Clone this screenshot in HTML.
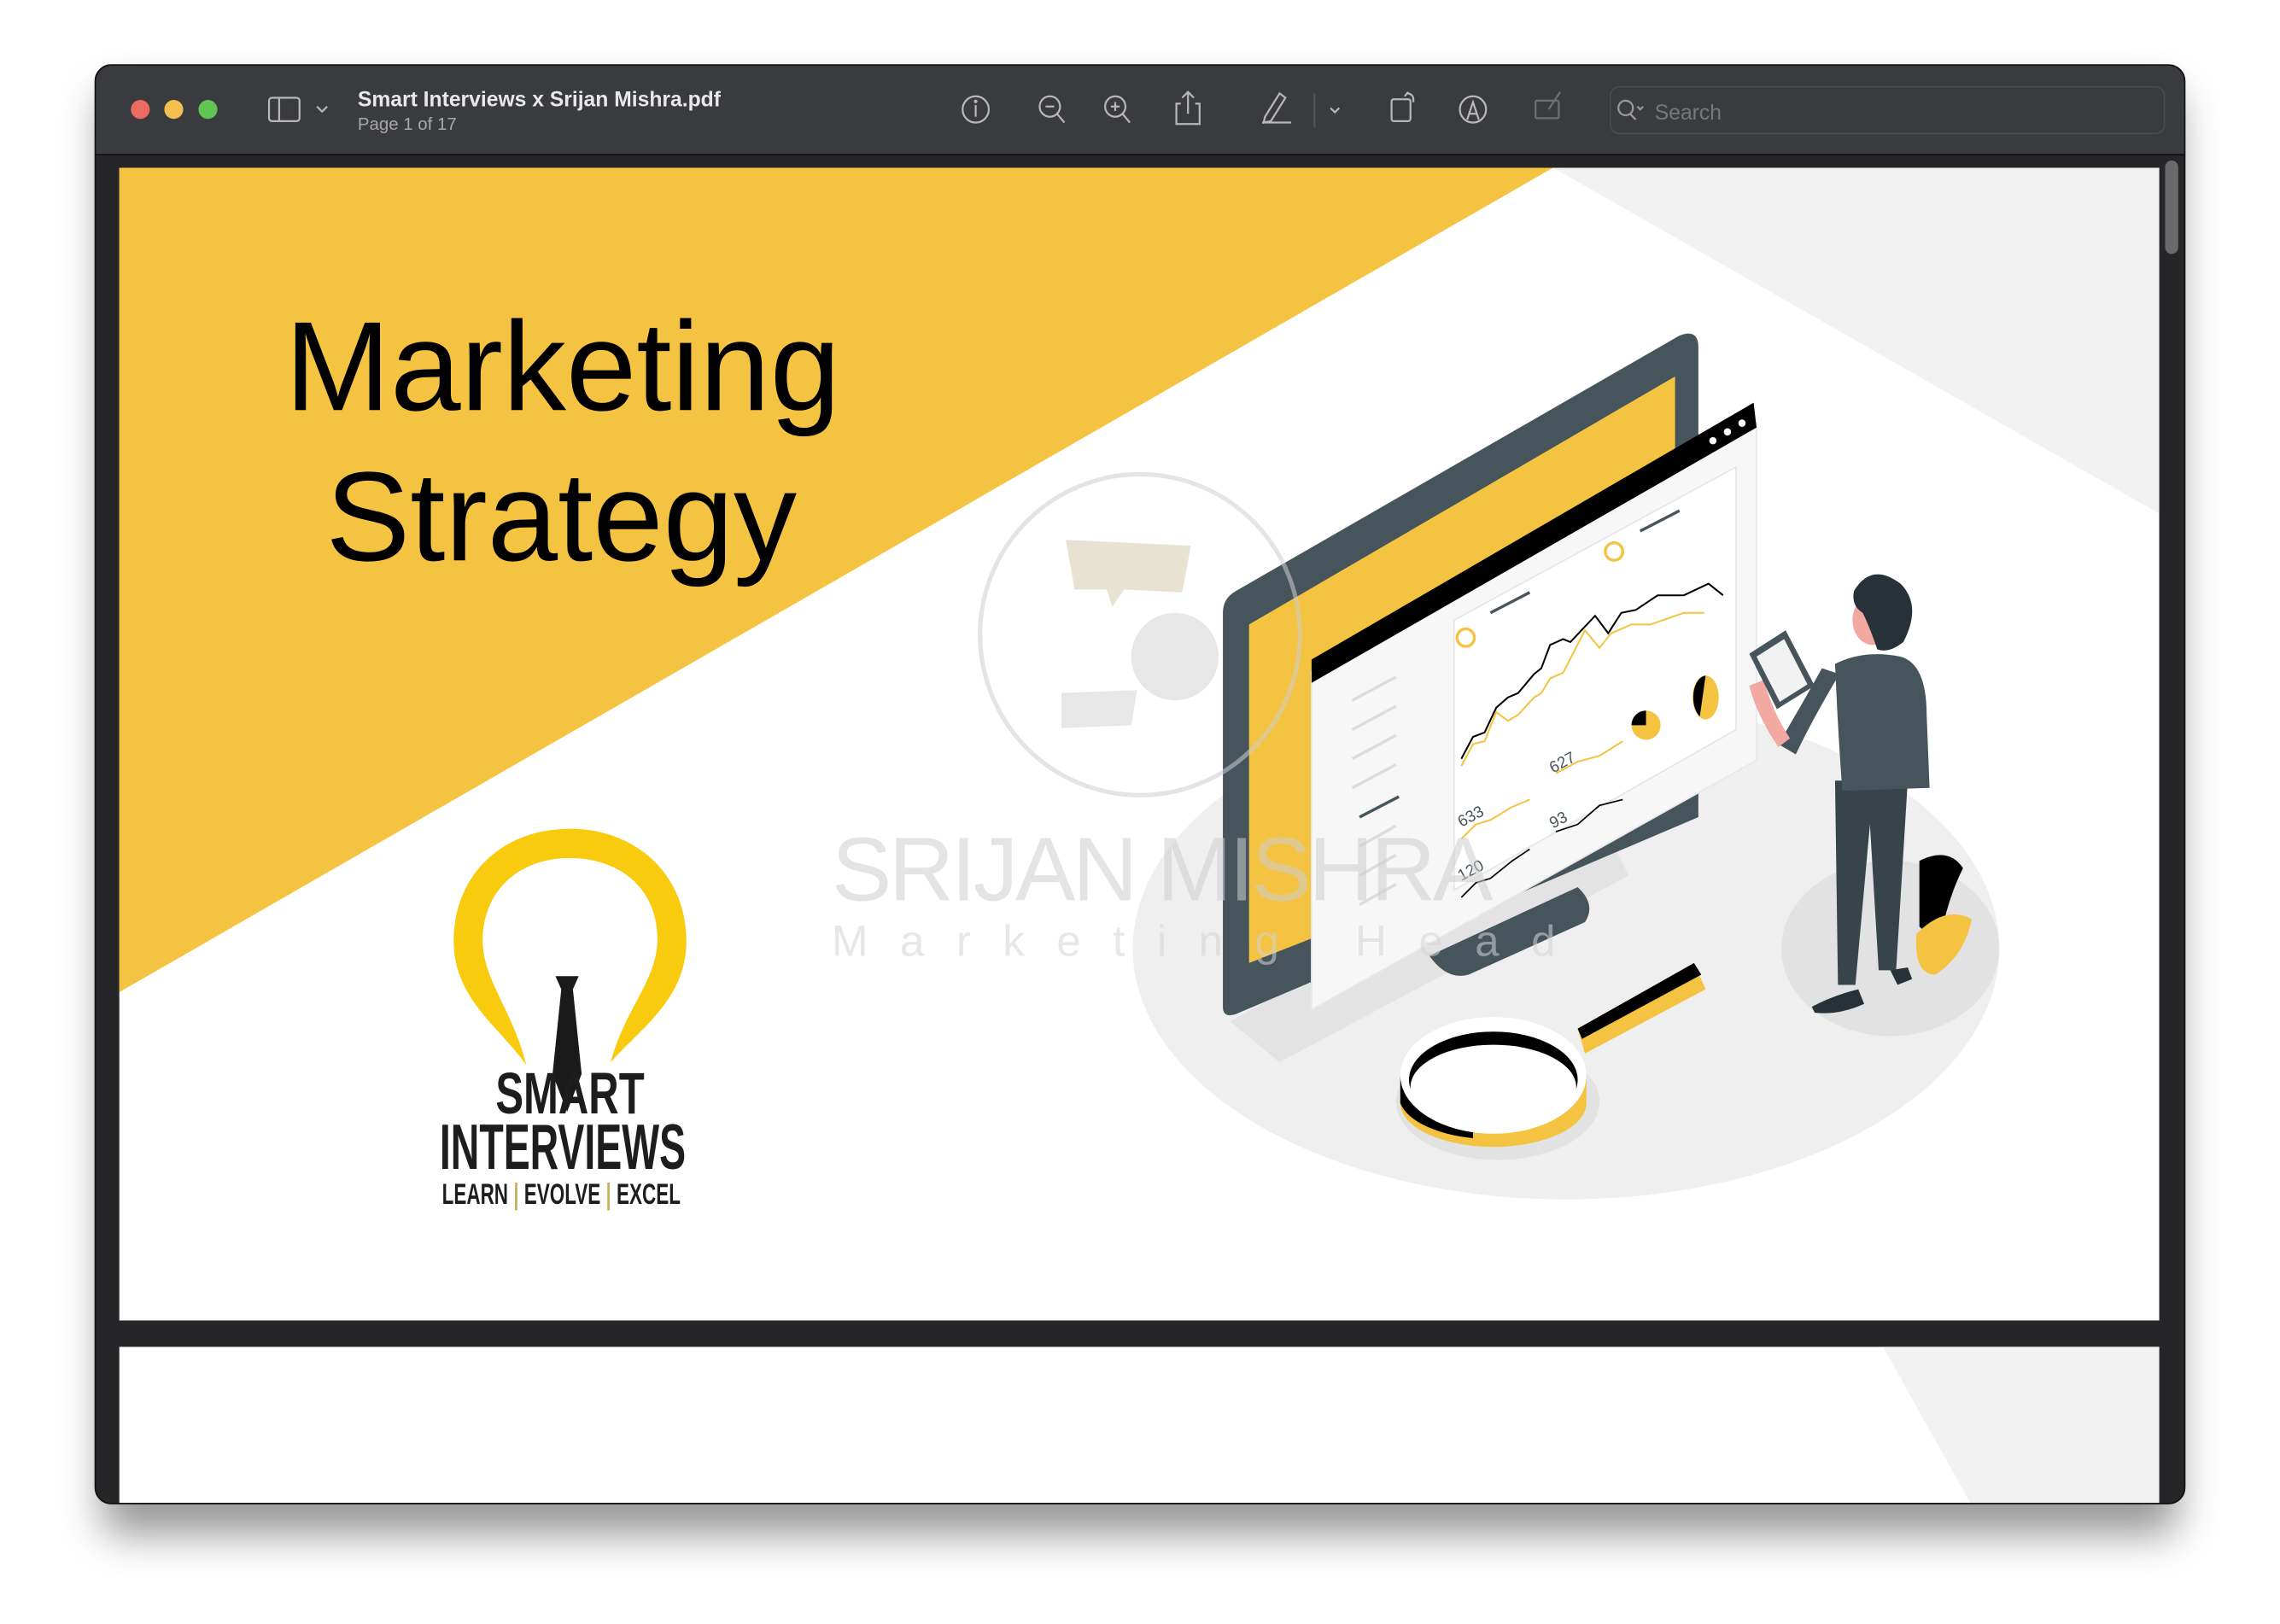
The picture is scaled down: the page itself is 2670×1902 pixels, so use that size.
<!DOCTYPE html>
<html><head><meta charset="utf-8"><style>
html,body{margin:0;padding:0;background:#fff;width:2670px;height:1902px;overflow:hidden}
svg{display:block}
</style></head><body>
<svg width="2670" height="1902" viewBox="0 0 1568 1113" preserveAspectRatio="none" xmlns="http://www.w3.org/2000/svg" font-family="Liberation Sans, Arial, sans-serif">
<defs>
<filter id="sh" x="-10%" y="-10%" width="120%" height="130%"><feGaussianBlur stdDeviation="14"/></filter>
<clipPath id="p1"><rect x="82" y="115" width="1403" height="790"/></clipPath>
<clipPath id="p2"><rect x="82" y="923" width="1403" height="107"/></clipPath>
</defs>
<rect width="1568" height="1113" fill="#fff"/>
<rect x="70" y="62" width="1428" height="990" rx="12" fill="#000" opacity="0.4" filter="url(#sh)"/>
<rect x="65.5" y="44.5" width="1437" height="986" rx="11" fill="#262628" stroke="#111" stroke-width="1"/>
<path d="M66 106 V56 a11 11 0 0 1 11 -11 H1491 a11 11 0 0 1 11 11 V106 Z" fill="#3a3b3f"/>
<line x1="66" y1="106" x2="1502" y2="106" stroke="#111" stroke-width="1"/>
<circle cx="96.5" cy="75" r="6.5" fill="#ed6a5e"/>
<circle cx="119.5" cy="75" r="6.5" fill="#f5bf4f"/>
<circle cx="143" cy="75" r="6.5" fill="#61c554"/>
<g stroke="#b8b8bb" fill="none" stroke-width="1.3">
<rect x="185" y="67" width="21" height="16" rx="2"/><line x1="192" y1="67" x2="192" y2="83"/>
<path d="M218 73 l3.5 3.5 l3.5 -3.5"/>
<circle cx="671" cy="75" r="9"/><line x1="671" y1="72" x2="671" y2="80"/><circle cx="671" cy="69.5" r=".6"/>
<circle cx="722" cy="73" r="7"/><line x1="727" y1="78" x2="732" y2="84"/><line x1="719" y1="73" x2="725" y2="73"/>
<circle cx="767" cy="73" r="7"/><line x1="772" y1="78" x2="777" y2="84"/><line x1="764" y1="73" x2="770" y2="73"/><line x1="767" y1="70" x2="767" y2="76"/>
<path d="M812 71 h-3 v14 h16 v-14 h-3 M817 78 v-15 M813 67 l4 -4 l4 4"/>
<path d="M870 80 l10 -16 l4 3 l-10 16 l-5 1 z"/><line x1="868" y1="84" x2="888" y2="84"/>
<line x1="904" y1="64" x2="904" y2="87" stroke="#555"/>
<path d="M915 74 l3 3 l3 -3"/>
<rect x="957" y="68" width="13" height="15" rx="1.5"/><path d="M968 64 a4 4 0 0 1 4 4 v2 M966 66 l2 -2.5 l2.5 1.5"/>
<circle cx="1013" cy="75" r="9"/><path d="M1009 82 l4 -12 l4 12 M1010.5 78 h5"/>
</g>
<g stroke="#6e6f73" fill="none" stroke-width="1.3"><rect x="1056" y="69" width="16" height="12" rx="1"/><path d="M1073 63 l-8 12"/></g>
<rect x="1107.5" y="59.5" width="381" height="32" rx="6" fill="#3a3b3f" stroke="#4b4c50"/>
<g stroke="#9a9a9d" fill="none" stroke-width="1.3"><circle cx="1118" cy="74" r="5"/><line x1="1121" y1="78" x2="1125" y2="82"/><path d="M1126 73 l2 2 l2 -2"/></g>
<text x="1138" y="82" font-size="14.5" fill="#77787c">Search</text>
<text x="246" y="73" font-size="14.5" font-weight="bold" fill="#e8e8ea">Smart Interviews x Srijan Mishra.pdf</text>
<text x="246" y="89" font-size="12" fill="#a8a8ab">Page 1 of 17</text>
<rect x="1489" y="110" width="9" height="64" rx="4.5" fill="#6a6a6d"/>

<g clip-path="url(#p1)">
<rect x="82" y="115" width="1403" height="790" fill="#fff"/>
<polygon points="1068,115 1485,115 1485,352" fill="#f2f2f2"/>
<polygon points="82,115 1068,115 82,680" fill="#f4c342"/>
<text x="196" y="281" font-size="87" fill="#000">Marketing</text>
<text x="224" y="384" font-size="87" fill="#000">Strategy</text>
<!-- logo -->
<path d="M392 568 C345 568 312 600 312 645 C312 685 345 705 362 730 C352 690 330 670 332 640 C335 605 362 588 392 588 C422 588 450 605 452 640 C454 670 430 690 420 728 C440 705 472 685 472 645 C472 600 438 568 392 568 Z" fill="#f8cb0f"/>
<path d="M382 669 h16 l-4 9 l6 58 l-10 26 l-10 -26 l6 -58 z" fill="#1a1a1a"/>
<text x="392" y="763" font-size="40" font-weight="bold" fill="#1d1d1d" text-anchor="middle" transform="translate(392 0) scale(0.72 1) translate(-392 0)">SMART</text>
<text x="387" y="801" font-size="44" font-weight="bold" fill="#1d1d1d" text-anchor="middle" transform="translate(387 0) scale(0.62 1) translate(-387 0)">INTERVIEWS</text>
<text x="386" y="825" font-size="20" font-weight="bold" fill="#1d1d1d" text-anchor="middle" transform="translate(386 0) scale(0.66 1) translate(-386 0)">LEARN <tspan fill="#c8b35a">|</tspan> EVOLVE <tspan fill="#c8b35a">|</tspan> EXCEL</text>
<!-- illustration -->
<ellipse cx="1077" cy="650" rx="298" ry="172" fill="#efefef"/>
<ellipse cx="1300" cy="650" rx="75" ry="60" fill="#e2e2e2"/>
<polygon points="846,700 1100,560 1120,600 880,728" fill="#e3e3e3"/>
<path d="M841 420 Q841 410 850 405 L1155 230 Q1168 225 1168 238 L1168 560 L850 695 Q841 698 841 690 Z" fill="#46555c"/>
<polygon points="859,428 1152,258 1152,545 859,660" fill="#f4c342"/>
<path d="M983 655 L1085 608 Q1098 620 1090 632 L1010 668 Q995 672 983 655 Z" fill="#46555c"/>
<polygon points="902,460 1208,290 1208,521 902,692" fill="#f7f7f7" stroke="#e8e8e8"/>
<polygon points="902,452 1206,276 1208,293 902,468" fill="#000"/>
<circle cx="1178" cy="302" r="2.5" fill="#fff"/><circle cx="1188" cy="296" r="2.5" fill="#fff"/><circle cx="1198" cy="290" r="2.5" fill="#fff"/>
<polygon points="1000,425 1194,320 1194,500 1000,610" fill="#fff" stroke="#e6e6e6"/>
<g stroke="#dcdcdc" stroke-width="2">
<line x1="930" y1="480" x2="960" y2="464"/><line x1="930" y1="500" x2="960" y2="484"/><line x1="930" y1="520" x2="960" y2="504"/><line x1="930" y1="540" x2="960" y2="524"/><line x1="935" y1="580" x2="960" y2="566"/><line x1="935" y1="600" x2="960" y2="586"/><line x1="935" y1="620" x2="960" y2="606"/>
</g>
<line x1="935" y1="560" x2="962" y2="546" stroke="#46555c" stroke-width="2"/>
<line x1="1025" y1="420" x2="1052" y2="406" stroke="#46555c" stroke-width="2"/>
<line x1="1128" y1="364" x2="1155" y2="350" stroke="#46555c" stroke-width="2"/>
<circle cx="1008" cy="437" r="6" fill="none" stroke="#f4c342" stroke-width="2"/>
<circle cx="1110" cy="378" r="6" fill="none" stroke="#f4c342" stroke-width="2"/>
<polyline points="1005,525 1013,510 1021,508 1029,488 1037,494 1044,490 1055,478 1060,475 1066,465 1075,461 1090,432 1100,444 1108,434 1122,428 1135,428 1158,420 1172,420" fill="none" stroke="#f4c342" stroke-width="1.2"/>
<polyline points="1005,540 1013,525 1021,522 1029,505 1037,498 1044,495 1055,482 1060,478 1066,462 1075,458 1080,460 1097,442 1106,454 1115,440 1125,438 1140,428 1158,428 1175,420 1185,428" fill="none" stroke="#000" stroke-width="1.2" transform="translate(0,-20)"/>
<circle cx="1132" cy="497" r="10" fill="#f4c342"/><path d="M1132 497 v-10 a10 10 0 0 0 -10 10 z" fill="#000"/>
<ellipse cx="1173" cy="478" rx="9" ry="15" fill="#f4c342"/><path d="M1173 463 a9 15 0 0 0 -4 28 z" fill="#000"/>
<polyline points="1005,575 1015,565 1025,562 1040,553 1052,548" fill="none" stroke="#f4c342" stroke-width="1.2"/>
<polyline points="1070,530 1085,522 1100,518 1116,508" fill="none" stroke="#f4c342" stroke-width="1.2"/>
<polyline points="1005,615 1015,605 1025,602 1040,590 1052,582" fill="none" stroke="#000" stroke-width="1"/>
<polyline points="1070,570 1085,565 1100,552 1116,548" fill="none" stroke="#000" stroke-width="1"/>
<text x="1005" y="567" font-size="11" fill="#46555c" transform="rotate(-28 1005 567)">633</text>
<text x="1068" y="530" font-size="11" fill="#46555c" transform="rotate(-28 1068 530)">627</text>
<text x="1068" y="568" font-size="11" fill="#46555c" transform="rotate(-28 1068 568)">93</text>
<text x="1005" y="604" font-size="11" fill="#46555c" transform="rotate(-28 1005 604)">120</text>
<!-- magnifier -->
<ellipse cx="1030" cy="755" rx="70" ry="40" fill="#e2e2e2"/>
<polygon points="1085,705 1165,660 1173,678 1090,722" fill="#f4c342"/>
<polygon points="1085,705 1165,660 1170,668 1088,712" fill="#000"/>
<path d="M963 738 v18 a64 30 0 0 0 128 0 v-18 z" fill="#f4c342"/>
<path d="M963 738 v18 a64 30 0 0 0 50 24 v-30 z" fill="#000"/>
<ellipse cx="1027" cy="737" rx="64" ry="40" fill="#fff"/>
<ellipse cx="1027" cy="740" rx="58" ry="33" fill="#000"/>
<ellipse cx="1027" cy="745" rx="57" ry="29" fill="#fff"/>
<!-- person -->
<path d="M1320 590 q20 -10 30 5 q-10 20 -15 45 q-5 5 -15 -5 z" fill="#000"/>
<path d="M1318 640 q20 -20 38 -10 q-5 25 -25 38 q-15 0 -13 -28z" fill="#f4c342"/>
<path d="M1262 535 h50 l-8 130 h-12 l-6 -100 l-10 110 h-12 z" fill="#37454b"/>
<path d="M1300 665 l12 -2 l3 8 l-10 4 z" fill="#263238"/>
<path d="M1246 690 q15 -8 32 -12 l4 10 q-18 8 -34 6 z" fill="#263238"/>
<path d="M1262 455 q20 -10 45 -5 q18 5 18 40 l2 50 l-60 2 q-3 -40 -5 -87 z" fill="#46555c"/>
<path d="M1265 462 q-18 30 -30 55 l-12 -7 q15 -25 30 -52 z" fill="#46555c"/>
<path d="M1203 470 q5 20 20 42 l8 -6 q-12 -18 -18 -40 z" fill="#f2a9a2"/>
<polygon points="1203,448 1228,432 1248,470 1222,486" fill="#46555c"/>
<polygon points="1208,450 1227,438 1243,469 1224,481" fill="#f2f2f2"/>
<ellipse cx="1288" cy="425" rx="14" ry="17" fill="#f2a9a2"/>
<path d="M1275 405 q12 -20 32 -5 q15 15 2 40 q-10 8 -18 5 q-5 -15 -10 -25 q-8 -5 -6 -15z" fill="#263238"/>
<!-- watermark on top -->
<g opacity="0.55">
<circle cx="784" cy="435" r="110" fill="none" stroke="#cfcfcf" stroke-width="3"/>
<path d="M733 370 l86 4 l-6 32 l-40 -2 l-8 12 l-4 -12 l-22 0 z" fill="#d6ccb0"/>
<circle cx="808" cy="450" r="30" fill="#d4d4d4"/>
<path d="M730 475 l52 -2 l-4 24 l-48 2 z" fill="#d4d4d4"/>
<text x="572" y="617" font-size="62" fill="#cfcfcf" letter-spacing="-2">SRIJAN MISHRA</text>
<text x="572" y="655" font-size="30" fill="#d4d4d4" letter-spacing="22">Marketing Head</text>
</g>
</g>
<rect x="82" y="905" width="1403" height="18" fill="#262628"/>
<g clip-path="url(#p2)">
<rect x="82" y="923" width="1403" height="107" fill="#fff"/>
<polygon points="1295,923 1485,923 1485,1030 1355,1030" fill="#f2f2f2"/>
</g>
</svg>
</body></html>
